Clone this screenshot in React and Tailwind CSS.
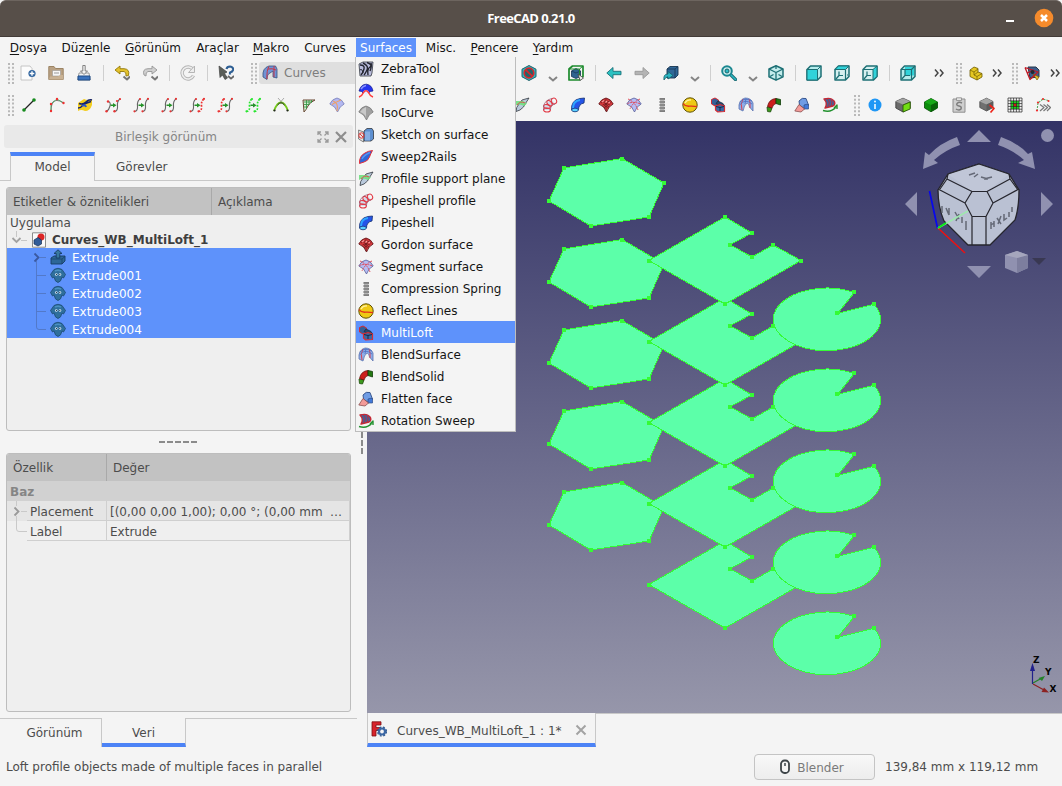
import React from "react";

function Svg({ children, className = "w-4 h-4" }) {
  return (
    <svg viewBox="0 0 16 16" className={className + " shrink-0"} strokeLinejoin="round">
      {children}
    </svg>
  );
}

const K = "#333940";

const FAN = "M.8 7Q3 2 8 1Q13 2 15.2 7Q10.500 9 8.500 15Q6.500 9 .8 7Z";

const art = {
  zebra: (
    <>
      <path d="M1 3L5 1H15L14 12L13 15H2Z" fill="#b9bcdc" stroke={K} strokeWidth=".8" />
      <path d="M2 4Q7 4 6 8T3 14M5 2Q11 5 9 9T6 14M9 1.500Q15 4 12 6T10 14M13 2Q14 5 12 10" fill="none" stroke="#23252f" strokeWidth="1.400" />
      <path d="M2 9Q4 7 5 12" fill="none" stroke="#23252f" />
    </>
  ),
  trim: (
    <>
      <path d="M1 8Q3 1 8.500 1.200Q14 2 15 8Q12 8 10.500 10Q8 6 5 10Q4 8 1 8Z" fill="#2634ee" stroke="#10188c" strokeWidth=".7" />
      <path d="M3 6Q5 3 8 2.500" stroke="#8c96ff" strokeWidth="1.400" fill="none" />
      <path d="M5 9Q8 5 11 9L8 12Z" fill="#e9ebff" />
      <path d="M1 14Q4 13 5.500 9.500Q8 6 10.500 9.500Q12 13 15 14" fill="none" stroke="#ff3a3a" strokeWidth="1.500" />
    </>
  ),
  iso: (
    <>
      <path d={FAN} fill="#a0a0a0" stroke="#777" strokeWidth=".8" />
      <path d="M2 7Q5 3 8 2L8 12Q6 8 2 7Z" fill="#c8c8c8" />
    </>
  ),
  sketch: (
    <>
      <path d="M6 4L9 1.500H14L15.500 4V12L13 14H6Z" fill="#5d8fd0" stroke={K} strokeWidth=".8" />
      <path d="M7 4.500H12V13.500H7Z" fill="#86aee4" />
      <path d="M.6 3L5.500 5V15L.6 12Z" fill="#e4e4e4" stroke="#555" strokeWidth=".7" />
      <circle cx="3.500" cy="8.500" r="2.700" fill="none" stroke="#e23a3a" />
      <path d="M2 7L5 10" stroke="#e23a3a" />
    </>
  ),
  sweep: (
    <>
      <path d="M1.500 14.500Q1 7 7 4Q10 2 14.500 1.500Q12.500 5 11.500 8Q10 12 6 13Z" fill="#2f66d8" stroke="#e5303a" />
      <path d="M4 10Q6 6 12 3.500" stroke="#5b93f0" strokeWidth="1.500" fill="none" />
    </>
  ),
  support: (
    <>
      <path d="M2 14.500Q2 10 5 7L8 3L15 1Q11 7 9.500 10L6 13Z" fill="#b9c9dc" stroke={K} strokeWidth=".8" />
      <path d="M1 4H9L13 6.500L10 9Q5 6 1 9Z" fill="#6fe07e" opacity=".9" />
      <path d="M3 8Q6 3.500 11 6" stroke="#d55" fill="none" />
    </>
  ),
  profile: (
    <>
      <path d="M2 13Q2 5 10 3L13 7Q8 8 8 13Z" fill="#cfdbea" />
      <g fill="none" stroke="#e23a46" strokeWidth="1.100">
        <ellipse cx="5" cy="13" rx="3.400" ry="2" />
        <ellipse cx="5" cy="9.500" rx="3.400" ry="1.900" transform="rotate(12 5 9.500)" />
        <ellipse cx="7.500" cy="6.200" rx="3.200" ry="2" transform="rotate(45 7.500 6.200)" />
        <ellipse cx="12" cy="4" rx="2.600" ry="3" transform="rotate(-20 12 4)" />
        <path d="M1.600 13V9Q3 3 10 1.500M8.400 13Q8.500 8 13 7" stroke="#96506a" strokeWidth=".7" />
      </g>
    </>
  ),
  pipe: (
    <>
      <path d="M1.500 13Q1 3 10 1.500L14.500 1L14 6Q8.500 7 8.500 13Q5 16 1.500 13Z" fill="#2454e8" stroke="#143070" strokeWidth=".8" />
      <path d="M3 11Q3 4 10 3" stroke="#2da4ff" strokeWidth="2" fill="none" />
      <ellipse cx="5" cy="13" rx="3.300" ry="1.800" fill="#5ad0ff" stroke="#143070" strokeWidth=".7" />
    </>
  ),
  gordon: (
    <>
      <path d={FAN} fill="#d8363b" stroke="#651a1c" strokeWidth=".9" />
      <path d="M3 6Q8 2 13 6M4.500 8Q8 5 12 8M6 11L8 9L10.500 11M4 3.500L11 10M12 3.500L5.500 9.500M8 1.500V14" fill="none" stroke="#651a1c" strokeWidth=".7" />
      <path d="M4 5L6 3.500M7.500 5.500L9 4M10.500 6L12 5" stroke="#ff9a9a" strokeWidth="1.300" />
    </>
  ),
  segment: (
    <>
      <path d={FAN} fill="#b5bdf5" stroke="#555c98" strokeWidth=".8" />
      <path d="M2 2Q9 5 12 13M14 2Q7 5 4 12M1.500 6.500Q8 4 14.500 7" fill="none" stroke="#e04a58" strokeDasharray="2 .7" />
    </>
  ),
  spring: (
    <>
      <path d="M5.500 2H11M5.500 5H11M5.500 8H11M5.500 11H11M5.500 14H11" stroke="#555" strokeWidth="1.500" />
      <path d="M6 3.500H10.500M6 6.500H10.500M6 9.500H10.500M6 12.500H10.500" stroke="#b5b5b5" strokeWidth="1.300" />
    </>
  ),
  reflect: (
    <>
      <circle cx="8" cy="8" r="7.200" fill="#eec916" stroke="#5f5100" />
      <path d="M3 6Q5 2.500 9 3" stroke="#fff09a" strokeWidth="1.300" fill="none" />
      <path d="M1 6.500Q3 9.500 7.500 9.200Q12 9 15 9.700" stroke="#e3301c" strokeWidth="1.300" fill="none" />
    </>
  ),
  loft: (
    <>
      <path d="M1.500 2.500L5 1L8.500 3V7.500L5 9L1.500 7Z" fill="#345f97" stroke="#d42b33" />
      <path d="M8 4L13 6.500L14.500 9L11 9L6 6.500Z" fill="#2a4a70" stroke="#1b2d44" strokeWidth=".8" />
      <path d="M5.500 9L10 7.500L14.500 9V14.500L7.500 14.800L5.500 13Z" fill="#3a68a3" stroke="#d42b33" strokeWidth="1.200" />
      <path d="M6 9.500L10 10.500L14 9.500M10 10.500V14" stroke="#15294a" fill="none" />
    </>
  ),
  blendsurf: (
    <>
      <path d="M1 12Q0 3 7 1Q13 1 15 6V14L11.500 10Q11 6 9 6Q6 8 5 14Z" fill="#8eaee8" stroke="#5a72b0" strokeWidth=".8" />
      <path d="M5 2Q2 7 4 13M11 2Q12.500 5 12 11" stroke="#dd4050" fill="none" />
      <path d="M1.500 8Q7 1 14 7M2 5Q7 0 14 4M8 1.500L7 7" stroke="#4c6ec0" fill="none" strokeWidth=".8" />
    </>
  ),
  blendsolid: (
    <>
      <path d="M1 10L6 11L4.500 15L1.500 14.500Z" fill="#3c9a1e" stroke="#1d4c0c" strokeWidth=".8" />
      <path d="M1.500 9.500Q3 2 10 1.500V6.500Q7 7 6 11Z" fill="#cd1f1c" stroke="#6b0c0a" strokeWidth=".8" />
      <path d="M10 1.500L14.500 2.500L14.500 8L10 6.500Z" fill="#257a13" stroke="#123c09" strokeWidth=".8" />
    </>
  ),
  flatten: (
    <>
      <path d="M5 4Q8 0 12 1.500L14.500 8L11 12L5.500 8Z" fill="#6f9ce4" stroke="#2f4d86" strokeWidth=".9" />
      <path d="M10 8Q12 7 14.500 7.500V12L10 12Z" fill="#4179d9" stroke="#2f4d86" strokeWidth=".7" />
      <path d="M.8 14L5 7.500L10.500 12L7 15Z" fill="#f39b99" stroke="#8c5050" strokeWidth=".8" />
    </>
  ),
  rotation: (
    <>
      <path d="M2 2Q9 0 12 4Q14 7 11 9L3 11Q6 6 2 2Z" fill="#42629a" stroke="#c42834" strokeWidth="1.400" />
      <path d="M5 2Q9 5 6 9M9 3Q11 5 9 9" stroke="#c42834" fill="none" strokeWidth=".9" />
      <path d="M1 13.500Q9 16 14 10M12 11L15 8V12" stroke="#22912e" strokeWidth="1.400" fill="none" />
    </>
  ),
  newdoc: (
    <>
      <path d="M1 1H10L12 3.500V15H1Z" fill="#fcfcfc" stroke="#c0c0c0" strokeWidth=".9" />
      <circle cx="12" cy="8.500" r="3.600" fill="#31659f" />
      <path d="M9.700 8.500H14.300M12 6.200V10.800" stroke="#fff" strokeWidth="1.400" />
    </>
  ),
  open: (
    <>
      <path d="M.8 1.500H6L7.500 3.500H15.200V14.500H.8Z" fill="#b9a183" stroke="#9c8464" />
      <path d="M4.500 5.500H12.500V11H4.500Z" fill="#f6f6f6" stroke="#8f8f8f" strokeWidth=".5" />
      <path d="M6 8H11" stroke="#999" />
      <path d="M2 11.500H10L12 10H15V14.500H1Z" fill="#c9b294" />
    </>
  ),
  save: (
    <>
      <path d="M3 8H13L14.200 15H1.800Z" fill="#f3f3f3" stroke="#777" strokeWidth=".7" />
      <path d="M2 11H14V15H2Z" fill="#3b73bd" stroke="#1f4d88" />
      <path d="M6.800 .5H9.200V6H11.500L8 9.500L4.500 6H6.800Z" fill="#f2f2f2" stroke="#777" strokeWidth=".9" />
    </>
  ),
  undo: (
    <>
      <path d="M6 1L1 5L6 9V6.500H10Q12.500 7 12 11L14.500 10.500Q16 4 10 3.700H6Z" fill="#e4c22c" stroke="#937807" strokeWidth=".9" />
      <path d="M9.500 11.500L13 14.500L16 11.500" fill="none" stroke="#777" strokeWidth="2" />
    </>
  ),
  redo: (
    <>
      <path d="M10 1L15 5L10 9V6.500H6Q3.500 7 4 11L2 10Q0 4 6 3.700H10Z" fill="#d0d0d0" stroke="#959595" strokeWidth=".9" />
      <path d="M9.500 11.500L13 14.500L16 11.500" fill="none" stroke="#777" strokeWidth="2" />
    </>
  ),
  refresh: (
    <>
      <path d="M13 4.500A6 6 0 1 0 13.500 10.500" fill="none" stroke="#b5b5b5" strokeWidth="3.400" />
      <path d="M13 4.500A6 6 0 1 0 13.500 10.500" fill="none" stroke="#efefef" strokeWidth="1.500" />
      <path d="M14.500 1V7.500H8.500Z" fill="#ededed" stroke="#b5b5b5" />
    </>
  ),
  help: (
    <>
      <path d="M1 1L9 7L6.500 8.500L9.500 13L7 14.500L4.500 10L2 12.500Z" fill="#5a5e58" stroke="#444" strokeWidth=".7" />
      <path d="M8.500 4Q9 1.500 12 1.500Q15.500 2 15 5Q14.500 7 12 7.500V9.500" fill="none" stroke="#2e5f94" strokeWidth="2.200" />
      <path d="M10 11L13 13.700L16 11" fill="none" stroke="#666" strokeWidth="1.800" />
    </>
  ),
  wb: (
    <>
      <path d="M1 12Q0 3 7 1H13.500L15 4V13L11 12V6L8 8Q5 9 5 14.500Z" fill="#6f93d5" stroke="#39527f" strokeWidth=".8" />
      <path d="M7 1.500Q4.500 5 5 14M12 1V12M6 4Q10 3 14 5" stroke="#cb3344" fill="none" />
    </>
  ),
  noclip: (
    <>
      <path d="M8 .5L15 4.200V11.800L8 15.500L1 11.800V4.200Z" fill="#28bcc4" stroke="#22616b" />
      <circle cx="8" cy="8" r="4.800" fill="#25646b" stroke="#d7262c" strokeWidth="1.700" />
      <path d="M4.800 4.800L11.200 11.200" stroke="#d7262c" strokeWidth="1.700" />
    </>
  ),
  bbox: (
    <>
      <path d="M1 4L4.500 1H15V11.500L11.500 15H1Z" fill="none" stroke="#1c8a2c" strokeWidth="1.700" />
      <path d="M3.500 6L8 3.500L12.500 6V11.500L8 13.500L3.500 11.500Z" fill="#2f6390" stroke="#173455" strokeWidth=".8" />
      <path d="M3.500 6L8 8L12.500 6" stroke="#173455" strokeWidth=".7" fill="none" />
      <path d="M1 4H11.500V15M11.500 4L15 1" stroke="#1c8a2c" fill="none" />
      <path d="M10 9L15.500 13L12 15.500Z" fill="#eee" stroke="#444" strokeWidth=".8" />
    </>
  ),
  left: <path d="M.8 8L7 2.500V6.300H15V9.700H7V13.500Z" fill="#2bc1c1" stroke="#1b7078" strokeWidth=".9" />,
  right: <path d="M15.200 8L9 2.500V6.300H1V9.700H9V13.500Z" fill="#b4b4b4" stroke="#999" strokeWidth=".9" />,
  link: (
    <>
      <path d="M4 4L7 1.500H15V10L12 13H4Z" fill="#2f6798" stroke="#173450" strokeWidth=".9" />
      <path d="M4 4H12V13M12 4L15 1.500" stroke="#173450" fill="none" strokeWidth=".8" />
      <path d="M1 15Q0 9 5 9V6.500L10 10.500L5 14V11.800Q2.500 12 1 15Z" fill="#2bb5c1" stroke="#155f68" strokeWidth=".8" />
    </>
  ),
  zoomfit: (
    <>
      <path d="M9 9L14.500 14.500" stroke="#1b6770" strokeWidth="3.200" strokeLinecap="round" />
      <path d="M9 9L14.500 14.500" stroke="#2bb9c3" strokeWidth="1.600" strokeLinecap="round" />
      <circle cx="6" cy="6" r="4.800" fill="#c9e9ea" stroke="#1b8790" strokeWidth="2" />
      <circle cx="6" cy="6" r="2" fill="#2bb9c3" stroke="#17656d" />
    </>
  ),
  isocube: (
    <>
      <path d="M8 .8L15 4V11.800L8 15.200L1 11.800V4Z" fill="#c4ecec" stroke="#1c6f74" strokeWidth="1.500" />
      <path d="M1 4L8 7.500L15 4M8 7.500V15M8 1V4M2 11.500L5.500 9.500M14 11.500L10.500 9.500" stroke="#1c6f74" strokeWidth="1.300" fill="none" />
    </>
  ),
  front: (
    <>
      <path d="M1 4.500L4.500 1H15V11.500L11.500 15H1Z" fill="#b4ecec" stroke="#1c6f74" strokeWidth="1.500" />
      <path d="M1 4.500H11.500V15H1Z" fill="#30d3da" stroke="#1c6f74" />
      <path d="M11.500 4.500L15 1" stroke="#1c6f74" />
    </>
  ),
  top: (
    <>
      <path d="M1 4.500L4.500 1H15V11.500L11.500 15H1Z" fill="#d5f0f0" stroke="#1c6f74" strokeWidth="1.500" />
      <path d="M1 4.500L4.500 1H15L11.500 4.500Z" fill="#30d3da" stroke="#1c6f74" />
      <path d="M11.500 4.500V15M5 6.500V10.500H9M5 10.500L2 14M13 10H14" stroke="#1c6f74" strokeWidth="1.200" fill="none" />
    </>
  ),
  rightv: (
    <>
      <path d="M1 4.500L4.500 1H15V11.500L11.500 15H1Z" fill="#d5f0f0" stroke="#1c6f74" strokeWidth="1.500" />
      <path d="M11 4.500L15 1V11.500L11 15Z" fill="#30d3da" stroke="#1c6f74" />
      <path d="M1 4.500H11M5 6.500V10.500H9M5 10.500L2 14" stroke="#1c6f74" strokeWidth="1.200" fill="none" />
    </>
  ),
  rear: (
    <>
      <path d="M1 4.500L4.500 1H15V11.500L11.500 15H1Z" fill="#b4ecec" stroke="#1c6f74" strokeWidth="1.500" />
      <path d="M5 2H14V10.500H5Z" fill="#30d3da" />
      <path d="M1 4.500H11.500V15M11.500 4.500L15 1M5 5V10.500H10M5 10.500L1.800 14" stroke="#1c6f74" strokeWidth="1.200" fill="none" />
    </>
  ),
  part: (
    <>
      <path d="M2 5L6 2L10 3.500V7L14 8.500V12L9 15L2 11.500Z" fill="#e5c722" stroke="#6d5b00" strokeWidth=".8" />
      <path d="M2 5L6 7L10 4M6 7V10L9 11.500L14 8.500M9 11.500V15M6 10L10 7" stroke="#6d5b00" fill="none" strokeWidth=".7" />
    </>
  ),
  measure: (
    <>
      <path d="M4 2H12L15 5V12L6 13Z" fill="#3d5f8e" stroke="#27364a" />
      <path d="M9 9L15 12L13 15Z" fill="#e5bb33" stroke="#7a5f00" strokeWidth=".7" />
      <path d="M1 2.500L6 14.500L14 7L1 2.500M3 8L10 5" stroke="#c01823" strokeWidth="1.300" fill="none" />
      <circle cx="8.500" cy="7" r="2" fill="#202833" />
    </>
  ),
  info: (
    <>
      <circle cx="8" cy="8" r="6.500" fill="#1f97f5" />
      <path d="M8 7V12" stroke="#fff" strokeWidth="1.500" />
      <circle cx="8" cy="4.500" r=".9" fill="#fff" />
    </>
  ),
  cubegreenface: (
    <>
      <path d="M.8 4.500L8 1.200L15.200 4.500V11L8 15L.8 11Z" fill="#6b6b6b" stroke="#3a3a3a" strokeWidth=".8" />
      <path d="M.8 4.500L8 1.200L15.200 4.500L8 7.500Z" fill="#a2a2a2" />
      <path d="M8 8L15.200 5V12L8 15Z" fill="#72dd13" stroke="#2a5c05" strokeWidth=".9" />
    </>
  ),
  cubegreen: (
    <>
      <path d="M1.500 5L8 1.500L14.500 5V11L8 14.800L1.500 11Z" fill="#0b8c0b" stroke="#064b06" strokeWidth=".8" />
      <path d="M1.500 5L8 1.500L14.500 5L8 8Z" fill="#17a817" />
      <path d="M8 8L14.500 5V11L8 14.800Z" fill="#086408" />
    </>
  ),
  clip: (
    <>
      <path d="M2 2H14V15.200H2Z" fill="#cfcfcf" stroke="#8f8f8f" />
      <path d="M5.500 .8H10.500V3.500H5.500Z" fill="#e5e5e5" stroke="#888" strokeWidth=".8" />
      <path d="M11 6Q8 4.500 6 6.500Q5 8.500 8 9T10 12Q8 14 5 12" fill="none" stroke="#7d7d7d" strokeWidth="1.500" />
    </>
  ),
  cubearrow: (
    <>
      <path d="M.8 4.500L7.500 1.200L14 4.500V10.500L7.500 14L.8 10.500Z" fill="#707070" stroke="#4b4b4b" strokeWidth=".8" />
      <path d="M.8 4.500L7.500 1.200L14 4.500L7.500 7.500Z" fill="#a5a5a5" />
      <path d="M7.500 7.500L14 4.500V10.500L7.500 14Z" fill="#5c5c5c" />
      <path d="M10.500 8L15 11.500L11.500 15.500" stroke="#ee2218" strokeWidth="1.600" fill="none" />
    </>
  ),
  grid: (
    <>
      <path d="M1 1H15V15H1Z" fill="#f5f5f5" />
      <path d="M4 4H12V12H4Z" fill="#1fd81f" />
      <path d="M6.500 6.500H9.500V9.500H6.500Z" fill="#f01717" />
      <path d="M1 1H15V15H1ZM1 3.800H15M1 6.600H15M1 9.400H15M1 12.200H15M3.800 1V15M6.600 1V15M9.400 1V15M12.200 1V15" fill="none" stroke="#222" strokeWidth=".7" />
    </>
  ),
  forward: (
    <>
      <path d="M2 14L3 6L8 2L13 3.500" stroke="#54ad61" fill="none" strokeWidth="1.100" strokeDasharray="2 1" />
      <g fill="#ee2d2d"><circle cx="2" cy="13.500" r="1.100" /><circle cx="3" cy="5.500" r="1.100" /><circle cx="8" cy="2" r="1.100" /><circle cx="13.500" cy="4" r="1.100" /></g>
      <path d="M5 7.500L9 10.500L5 14M8.500 7.500L12.500 10.500L8.500 14M12 7.500L15.500 10.500L12 14" fill="none" stroke="#777" strokeWidth="1.200" />
    </>
  ),
  line: (
    <>
      <path d="M3 13L13 3" stroke="#222" strokeWidth="1.200" />
      <circle cx="3" cy="13" r="1.800" fill="#168b1d" /><circle cx="13" cy="3" r="1.800" fill="#168b1d" />
    </>
  ),
  arc: (
    <>
      <path d="M2 14Q2 4 7 3.500Q11 3 14.500 6" fill="none" stroke="#777" strokeWidth="1.100" />
      <path d="M2 14L2 7L8 2L14.500 6" fill="none" stroke="#46a559" strokeWidth=".8" />
      <g fill="#ee3030"><circle cx="2" cy="14" r="1.200" /><circle cx="2" cy="7" r="1.200" /><circle cx="8" cy="2" r="1.200" /><circle cx="14.500" cy="6" r="1.200" /></g>
    </>
  ),
  flag: (
    <>
      <path d="M1 6L7 2Q11 4 15 2V8Q13 14 8 14Q4 12 1 14Z" fill="#f3cd1e" />
      <path d="M1 11Q4 11 5 9T14 4.500M2 6.500Q6 8 9 5T15 3" stroke="#15236f" strokeWidth="1.600" fill="none" />
      <path d="M5 9Q8 7 9 10" stroke="#2c56cb" strokeWidth="2" fill="none" />
    </>
  ),
  crescent: (
    <>
      <path d="M2 3H14Q9 5 7 9T3 15Z" fill="#d5edd3" stroke="#6b4935" />
      <path d="M3 5H11M3 7.500H8M3 10H6M5.500 3V12M8 3V8M10.500 3V5.500" stroke="#3a9a4a" strokeWidth=".9" />
    </>
  ),
  tangent: (
    <>
      <path d="M5 1L12 9M11 1L4 9" stroke="#aaa" />
      <path d="M1 14Q4 5.500 8 5.500T15 14" stroke="#76c91e" strokeWidth="1.800" fill="none" />
      <path d="M4.500 8Q8 3.500 11.500 8" stroke="#333" fill="none" />
      <circle cx="1.500" cy="13.500" r="1.100" fill="#222" /><circle cx="14.500" cy="13.500" r="1.100" fill="#222" />
    </>
  ),
  bluefan: (
    <>
      <path d={FAN} fill="#b3b8f1" stroke="#7f86bd" strokeWidth=".9" />
      <path d="M4 4Q10 6 8 14M3 7.500Q9 4 12 3" fill="none" stroke="#f0a062" strokeWidth="1.100" />
    </>
  ),
};

function joinArt(l, r) {
  return (
    <>
      <path d="M1.500 14.500Q5 14 4.500 9T7 2" fill="none" stroke={l || "#666"} strokeWidth={l ? 1.700 : 1.100} strokeDasharray={l ? "1.800 1.300" : "none"} />
      <path d="M9.500 14.500Q13 14 12.500 9T15 2" fill="none" stroke={r || "#666"} strokeWidth={r ? 1.700 : 1.100} strokeDasharray={r ? "1.800 1.300" : "none"} />
      <path d="M5.500 7.500H8V6L11.500 8.300L8 10.600V9H5.500Z" fill="#249329" />
      <g fill={l === "#27e52f" ? l : "#e83434"}>
        <circle cx="1.500" cy="14.300" r="1.100" /><circle cx="9.500" cy="14.300" r="1.100" />
        <circle cx="7" cy="2" r="1.100" /><circle cx="15" cy="1.800" r="1.100" />
      </g>
    </>
  );
}
art.join1 = (
  <>
    <path d="M3 4.500Q6 5 5 9T1.500 14.500M15 2Q12 4 12.500 9T9.500 14.500" fill="none" stroke="#666" strokeWidth="1.100" />
    <path d="M5.500 7.500H8V6L11.500 8.300L8 10.600V9H5.500Z" fill="#249329" />
    <g fill="#e83434"><circle cx="3" cy="4.500" r="1.200" /><circle cx="1.500" cy="14.300" r="1.200" /><circle cx="9.500" cy="14.300" r="1.200" /><circle cx="12" cy="4" r="1.100" /><circle cx="15" cy="2" r="1.100" /></g>
  </>
);
art.join2 = joinArt();
art.join3 = joinArt();
art.join4 = joinArt(null, "#ef2d2d");
art.join5 = joinArt("#ef2d2d", null);
art.join6 = joinArt("#27e52f", "#27e52f");

const Tool = ({ name }) => (
  <div className="w-7 shrink-0 flex items-center justify-center">
    <Svg>{art[name]}</Svg>
  </div>
);

const Sep = () => (
  <div className="w-2.5 shrink-0 flex justify-center">
    <div className="w-px h-4 bg-[#cfcfcf]" />
  </div>
);

const Handle = () => (
  <svg viewBox="0 0 6 21" className="w-1.5 h-[21px] shrink-0">
    <path d="M1 0V21M5 0V21" stroke="#b9b9b9" strokeWidth="2" strokeDasharray="2 1.800" />
  </svg>
);

const Drop = () => (
  <div className="w-[19px] shrink-0 flex justify-center pt-3">
    <svg viewBox="0 0 10 6" className="w-2.5 h-1.5"><path d="M1 1L5 4.500L9 1" fill="none" stroke="#858585" strokeWidth="2" /></svg>
  </div>
);

const More = ({ className }) => (
  <div className={"shrink-0 flex " + className}>
    <svg viewBox="0 0 10 8" className="w-2.5 h-2 shrink-0"><path d="M1 .5L4 4L1 7.500M6 .5L9 4L6 7.500" fill="none" stroke="#454545" strokeWidth="1.500" /></svg>
  </div>
);

const menus = [
  ["D", "osya", "", "w-[49px]"],
  ["", "Düz", "e", "w-[66px]", "nle"],
  ["G", "örünüm", "", "w-[68px]"],
  ["", "Araçlar", "", "w-[61px]"],
  ["M", "akro", "", "w-[46px]"],
  ["", "Curves", "", "w-[62px]"],
  ["", "Surfaces", "", "w-[60px]"],
  ["", "Misc.", "", "w-[50px]"],
  ["P", "encere", "", "w-[57px]"],
  ["Y", "ardım", "", "w-[60px]"],
];

function MenuBar() {
  return (
    <div className="h-[19px] mt-px pl-1 flex shrink-0 text-[#141414]">
      {menus.map(([a, b, c, w, d], i) => (
        <div key={i} className={w + " flex items-center justify-center whitespace-pre " + (i === 6 ? "bg-[#5e92fb] text-white" : "")}>
          <span><u className="underline-offset-2">{a}</u>{b}<u className="underline-offset-2">{c}</u>{d}</span>
        </div>
      ))}
    </div>
  );
}

const surfaceItems = [
  ["zebra", "ZebraTool"], ["trim", "Trim face"], ["iso", "IsoCurve"], ["sketch", "Sketch on surface"],
  ["sweep", "Sweep2Rails"], ["support", "Profile support plane"], ["profile", "Pipeshell profile"],
  ["pipe", "Pipeshell"], ["gordon", "Gordon surface"], ["segment", "Segment surface"],
  ["spring", "Compression Spring"], ["reflect", "Reflect Lines"], ["loft", "MultiLoft"],
  ["blendsurf", "BlendSurface"], ["blendsolid", "BlendSolid"], ["flatten", "Flatten face"], ["rotation", "Rotation Sweep"],
];

function SurfacesMenu() {
  return (
    <div className="absolute left-[355px] top-[57px] w-[161px] h-[375px] bg-[#f4f4f4] border border-t-0 border-[#bdbdbd] text-[#141414] z-10">
      {surfaceItems.map(([icon, label]) => (
        <div key={icon} className={"h-[22px] pl-0.5 pt-0.5 flex items-center gap-[7px] whitespace-nowrap " + (icon === "loft" ? "bg-[#5e92fb] text-white" : "")}>
          <Svg>{art[icon]}</Svg>
          <span>{label}</span>
        </div>
      ))}
    </div>
  );
}

function Toolbars() {
  return (
    <div className="h-16 shrink-0 flex flex-col overflow-hidden">
      <div className="h-8 flex items-center pl-2">
        <Handle />
        <div className="w-px" />
        {["newdoc", "open", "save"].map((n) => <Tool key={n} name={n} />)}
        <Sep /><Tool name="undo" /><Tool name="redo" />
        <Sep /><Tool name="refresh" />
        <Sep /><Tool name="help" />
        <div className="w-[19px] shrink-0 flex justify-center pl-2"><Handle /></div>
        <div className="w-60 mr-4 h-[22px] shrink-0 rounded-[3px] bg-[#dfdfdf] text-[#7d7d7d] flex items-center gap-[6px] pl-[3px]">
          <Svg>{art.wb}</Svg><span>Curves</span>
        </div>
        <Tool name="noclip" /><Drop /><Tool name="bbox" />
        <Sep /><Tool name="left" /><Tool name="right" /><div className="w-px shrink-0" /><Tool name="link" /><Drop />
        <div className="w-px shrink-0" /><Sep /><Tool name="zoomfit" /><Drop /><Tool name="isocube" />
        <Sep /><Tool name="front" /><Tool name="top" /><Tool name="rightv" />
        <Sep /><Tool name="rear" />
        <More className="w-[34px] pl-3" /><Handle /><Tool name="part" />
        <More className="w-[22px] pl-0.5" /><Handle /><Tool name="measure" /><More className="w-5 pl-1" />
      </div>
      <div className="h-8 flex items-center pl-2">
        <Handle />
        <div className="w-px" />
        {["line", "arc", "flag", "join1", "join2", "join3", "join4", "join5", "join6", "tangent", "crescent", "bluefan"].map((n) => <Tool key={n} name={n} />)}
        <div className="w-[157px] shrink-0" />
        {["support", "profile", "pipe", "gordon", "segment", "spring", "reflect", "loft", "blendsurf", "blendsolid", "flatten", "rotation"].map((n) => <Tool key={n} name={n} />)}
        <div className="w-[17px] shrink-0 flex justify-center pl-2"><Handle /></div>
        {["info", "cubegreenface", "cubegreen", "clip", "cubearrow", "grid", "forward"].map((n) => <Tool key={n} name={n} />)}
      </div>
    </div>
  );
}

const bodyArt = (
  <>
    <path d="M4 2.500Q8 0 12 2.500L15.500 7.500L13.500 11L12 10Q11 15 8 15.500Q5 15 4 10L2.500 11L.5 7.500Z" fill="#2f6f9c" stroke="#1c4a72" strokeWidth=".8" />
    <path d="M5 4Q8 2.500 11 4" stroke="#4a90c0" fill="none" strokeWidth="1.500" />
    <circle cx="6.300" cy="7.500" r="1.300" fill="#cfe4f5" /><circle cx="10" cy="7.500" r="1.300" fill="#cfe4f5" />
    <circle cx="6.500" cy="7.500" r=".6" fill="#123" /><circle cx="9.800" cy="7.500" r=".6" fill="#123" />
  </>
);
const extrudeArt = (
  <>
    <path d="M1 9L4 7H15V12L12 15H1Z" fill="#2d6798" stroke="#173c66" strokeWidth=".9" />
    <path d="M8 .8L12 4.500H9.800V9H6.200V4.500H4Z" fill="#38789f" stroke="#173c66" strokeWidth=".9" />
    <path d="M1 10H12V15M12 10L15 7.500" stroke="#173c66" fill="none" strokeWidth=".7" />
  </>
);

function TreePanel() {
  return (
    <div className="mx-1.5 w-[345px] h-[244px] mt-1.5 shrink-0 border border-[#bdbdbd] rounded-[3px] bg-[#efefef] overflow-hidden">
      <div className="h-[27px] bg-[#c2c2c2] flex items-center">
        <div className="w-[205px] h-full pl-1.5 flex items-center border-r border-[#a9a9a9]">Etiketler &amp; öznitelikleri</div>
        <div className="pl-1.5">Açıklama</div>
      </div>
      <div className="h-4 pl-[3px] flex items-center">Uygulama</div>
      <div className="h-[17px] flex items-center font-bold text-[#3e3e3e]">
        <svg viewBox="0 0 24 18" className="w-6 h-[18px]">
          <path d="M9.500 0V6M14 9.500H20" stroke="#c7c7c7" /><path d="M5.500 7L9.500 11L13.500 7" fill="none" stroke="#a2a2a2" strokeWidth="1.800" />
        </svg>
        <Svg>
          <path d="M1.500 .8H14.500V15.200H1.500Z" fill="#fafafa" stroke="#8c8c8c" />
          <circle cx="10" cy="5" r="3.500" fill="#dc2525" />
          <path d="M3 8L7 5.500L10.500 8V12L7 14L3 12Z" fill="#325c98" stroke="#172f55" strokeWidth=".7" />
        </Svg>
        <span className="pl-[5px]">Curves_WB_MultiLoft_1</span>
      </div>
      <div className="w-[284px] bg-[#5e92fb] text-white">
        {["Extrude", "Extrude001", "Extrude002", "Extrude003", "Extrude004"].map((n, i) => (
          <div key={n} className="h-[18px] flex items-center">
            <svg viewBox="0 0 43 18" className="w-[43px] h-[18px]">
              <path d={i === 4 ? "M29.500 0V7Q29.500 9.500 32 9.500H39" : i === 0 ? "M29.500 13V18M33 9.500H39" : "M29.500 0V18M29.500 9.500H39"} fill="none" stroke="#5279c9" />
              {i === 0 && <path d="M27.500 5.500L31.500 9.500L27.500 13.500" fill="none" stroke="#3a59a0" strokeWidth="1.800" />}
            </svg>
            <Svg>{i === 0 ? extrudeArt : bodyArt}</Svg>
            <span className="pl-1.5 pt-0.5">{n}</span>
          </div>
        ))}
      </div>
    </div>
  );
}

function PropertyPanel() {
  return (
    <div className="mx-1.5 w-[345px] h-[259px] shrink-0 border border-[#bdbdbd] rounded-[3px] bg-[#efefef] overflow-hidden">
      <div className="h-[27px] bg-[#c2c2c2] flex items-center">
        <div className="w-[100px] h-full pl-1.5 flex items-center border-r border-[#a9a9a9]">Özellik</div>
        <div className="pl-1.5">Değer</div>
      </div>
      <div className="h-5 bg-[#d1d1d1] pl-[3px] pt-0.5 flex items-center font-bold text-[#858585]">Baz</div>
      <div className="h-5 bg-[#e5e5e5] flex items-stretch">
        <svg viewBox="0 0 20 20" className="w-5 h-5"><path d="M9.500 0V5M9.500 15V20M14 10.500H20" stroke="#c9c9c9" /><path d="M7.500 6.500L11.500 10.500L7.500 14.500" fill="none" stroke="#999" strokeWidth="1.800" /></svg>
        <div className="w-20 pl-[3px] pt-0.5 flex items-center border-r border-b border-[#cfcfcf]">Placement</div>
        <div className="w-[243px] pl-[3px] pr-[7px] pt-0.5 flex items-center justify-between border-r border-b border-[#cfcfcf] whitespace-nowrap"><span>[(0,00 0,00 1,00); 0,00 °; (0,00 mm</span><span>…</span></div>
      </div>
      <div className="h-5 flex items-stretch">
        <svg viewBox="0 0 20 20" className="w-5 h-5"><path d="M9.500 0V8Q9.500 10.500 12 10.500H20" stroke="#c9c9c9" fill="none" /></svg>
        <div className="w-20 pl-[3px] pt-0.5 flex items-center border-r border-b border-[#cfcfcf]">Label</div>
        <div className="w-[243px] pl-[3px] pt-0.5 flex items-center border-r border-b border-[#cfcfcf]">Extrude</div>
      </div>
    </div>
  );
}

function SidePanel() {
  return (
    <div className="w-[357px] shrink-0 flex flex-col text-[#4c4c4c]">
      <div className="mt-1 ml-1 w-[349px] h-[23px] shrink-0 bg-[#e9e9e9] rounded-[3px] flex items-center text-[#858585]">
        <span className="flex-1 text-center pl-[11px] pt-px">Birleşik görünüm</span>
        <svg viewBox="0 0 12 12" className="w-3 h-3"><path d="M1 4V1H4M8 1H11V4M11 8V11H8M4 11H1V8M1 1L4.500 4.500M11 1L7.500 4.500M11 11L7.500 7.500M1 11L4.500 7.500" fill="none" stroke="#9a9a9a" strokeWidth="1.300" /></svg>
        <svg viewBox="0 0 12 12" className="w-3 h-3 ml-1.5 mr-1.5"><path d="M1 1L11 11M11 1L1 11" stroke="#8d8d8d" strokeWidth="2.200" /></svg>
      </div>
      <div className="mt-1 h-[29px] shrink-0 flex">
        <div className="w-2.5 border-b border-[#c8c8c8]" />
        <div className="w-[85px] border-x border-[#c8c8c8] border-t-4 border-t-[#4c83f6] flex items-center justify-center pb-1">Model</div>
        <div className="flex-1 border-b border-[#c8c8c8] pl-[21px] pt-0.5 flex items-center">Görevler</div>
      </div>
      <TreePanel />
      <div className="h-[22px] shrink-0 flex items-center justify-center gap-0.5 pr-0.5">
        {[0, 1, 2, 3, 4].map((i) => <div key={i} className="w-1.5 h-0.5 bg-[#8b8b8b]" />)}
      </div>
      <PropertyPanel />
      <div className="mt-1.5 h-[29px] shrink-0 flex">
        <div className="w-[102px] border-t border-r border-[#c8c8c8] pl-2 flex items-center justify-center">Görünüm</div>
        <div className="w-[84px] border-r border-[#c8c8c8] border-b-4 border-b-[#4c83f6] flex items-center justify-center pt-1">Veri</div>
        <div className="flex-1 border-t border-[#c8c8c8]" />
      </div>
    </div>
  );
}

const hexPts = [[564, 168], [622, 158.500], [664, 183], [649, 217], [591, 226], [549, 201]];
const cutPts = [[725, 217], [752, 233], [730, 244.700], [752, 257], [773, 245], [801, 260.500], [725, 304], [649, 260.500]];
const rows = [4, 3, 2, 1, 0];

const Dots = ({ pts }) => pts.map(([x, y], i) => <rect key={i} x={Math.round(x) - 2} y={Math.round(y) - 2} width="4" height="4" fill="#35fb35" />);

function Poly({ pts, i }) {
  return (
    <g transform={`translate(0 ${Math.round(i * 81.1)})`}>
      <polygon points={pts.map((p) => p.join(",")).join(" ")} fill="#5cffa9" stroke="#35fb35" />
      <Dots pts={pts} />
    </g>
  );
}

function NavCube() {
  return (
    <g>
      <g fill="#9091b0">
        <path d="M979 130L991 142H967ZM979 278L991 266H967ZM905 204L917 192V216ZM1053 204L1041 192V216Z" />
        <circle cx="1047.500" cy="135.500" r="6.500" />
        <path d="M957 137L960 145Q945 150 934 160L938 163L923 169L925 152L929 155Q940 143 957 137Z" />
        <path d="M1001 137L998 145Q1013 150 1024 160L1018 163L1035 169L1032 152L1028 154Q1018 143 1001 137Z" />
        <path d="M1005 255L1017 251L1028 255V268L1017 273L1005 268Z" />
      </g>
      <path d="M1017 258L1028 255V268L1017 273Z" fill="#7d7e9e" />
      <path d="M1005 255L1017 251L1028 255L1017 258Z" fill="#a5a6bd" />
      <path d="M1032 258H1046L1039 265Z" fill="#393852" />
      <path d="M979 164L1009 174L1019 190Q1019 208 1015 220L990 245H968L944 221Q938 207 938 190L948 174Z" fill="#bac1d3" stroke="#26262e" strokeWidth="1.300" />
      <path d="M948 174L979 164L1009 174L987 191.500H972Z" fill="#c0c6d7" />
      <g fill="none" stroke="#26262e" strokeWidth="1.200" strokeLinejoin="round">
        <path d="M947 179L972 191.500H987L1010 179M972 191.500L965 203L972 216.500H986L993 203L987 191.500M938 189L965 203M993 203L1019 189M972 216.500V245M986 216.500V245M947 179L940 189M1010 179L1018 190" />
        <path d="M948 174L979 164L1009 174M948 174L947 179M1009 174L1010 179" />
      </g>
      <g fill="none" stroke="#555966" strokeWidth="1.500" opacity=".85">
        <path d="M969 175L975 173M974 177L978 174M981 177L988 179M984 179L992 177" />
        <path d="M942 206V213M946 208L949 215M949 208V215M955 212L959 219M959 214L956 221M962 217V223M966 221V230" />
        <path d="M991 222V229M994 221V227M991 225L994 223M997 218L1001 224M1001 216L998 224M1004 214V220L1007 218M1009 212V217M1012 207V212" />
      </g>
      <path d="M929.500 191L937.500 228" stroke="#0707ef" strokeWidth="1.700" />
      <path d="M938 228L965 253" stroke="#ef1010" strokeWidth="1.500" />
      <path d="M938 228L968 211" stroke="#9fe9ae" strokeWidth="1.500" />
      <path d="M938 228L946 223" stroke="#06ee15" strokeWidth="2" />
    </g>
  );
}

function Viewport() {
  return (
    <svg viewBox="367 121 695 592" className="w-[695px] h-[592px] shrink-0">
      <defs>
        <linearGradient id="sky" x1="0" y1="0" x2="0" y2="1"><stop offset="0" stopColor="#333366" /><stop offset="1" stopColor="#9696aa" /></linearGradient>
      </defs>
      <rect x="367" y="121" width="695" height="592" fill="url(#sky)" />
      <g shapeRendering="crispEdges">
        {rows.map((i) => <Poly key={i} pts={hexPts} i={i} />)}
        {rows.map((i) => <Poly key={i} pts={cutPts} i={i} />)}
        {rows.map((i) => (
          <g key={i} transform={`translate(0 ${Math.round(i * 81.1)})`}>
            <path d="M854.300 292.500A53.700 31.200 0 1 0 874 304.300L837.500 313.500Z" fill="#5cffa9" stroke="#35fb35" />
            <Dots pts={[[854, 292], [874, 304], [837, 313]]} />
          </g>
        ))}
      </g>
      <NavCube />
      <g strokeWidth="1.200">
        <path d="M1032.500 684V666" stroke="#21218c" /><path d="M1030 671L1032.500 663L1035 671Z" fill="#21218c" />
        <path d="M1033 683L1041 678.500" stroke="#228228" /><path d="M1045 676L1042 681L1038.500 678Z" fill="#228228" />
        <path d="M1033 684L1044 690" stroke="#8c2222" /><path d="M1049 692.500L1041.500 692L1044 687.500Z" fill="#8c2222" />
      </g>
      <g className="font-bold text-[9px]" fill="#050505">
        <text x="1033" y="663">Z</text><text x="1045" y="675">Y</text><text x="1049.500" y="692">X</text>
      </g>
    </svg>
  );
}

export default function App() {
  return (
    <div className="relative w-[1062px] h-[786px] overflow-hidden flex flex-col bg-[#f4f4f4] text-[12px] leading-4 font-['DejaVu_Sans',sans-serif]">
      <div className="h-[37px] shrink-0 bg-[#574f49] border-t border-t-[#6d655f] border-b border-b-[#423b37] rounded-t-md flex items-center text-white">
        <div className="w-[1006px] pl-14 pb-0.5 text-center font-['Open_Sans',sans-serif] font-bold text-[13px] tracking-[-0.6px]">FreeCAD 0.21.0</div>
        <div className="w-2 h-0.5 mt-1 bg-white shrink-0" />
        <svg viewBox="0 0 20 20" className="w-5 h-5 ml-5 mb-0.5"><circle cx="10" cy="10" r="9.300" fill="#f58b2c" /><path d="M7 7L13 13M13 7L7 13" stroke="#fff" strokeWidth="2.500" /></svg>
      </div>
      <MenuBar />
      <Toolbars />
      <div className="flex h-[626px] shrink-0">
        <SidePanel />
        <div className="w-2.5 shrink-0 pl-1 pt-[311px]">
          <div className="flex flex-col gap-0.5">
            {[0, 1, 2].map((i) => <div key={i} className="w-0.5 h-1.5 bg-[#8b8b8b]" />)}
          </div>
        </div>
        <div className="flex flex-col text-[#4c4c4c]">
          <Viewport />
          <div className="h-[34px] flex">
            <div className="w-[229px] pl-[3px] pt-1 border-x border-[#c8c8c8] border-b-4 border-b-[#4c83f6] flex items-center">
              <Svg className="w-4 h-4 mb-0.5">
                <path d="M1 .8H10V4H5V6.500H9V9.500H5V15H1Z" fill="#d8232b" stroke="#7c1015" strokeWidth=".8" />
                <circle cx="11" cy="10.500" r="3" fill="none" stroke="#3c68a5" strokeWidth="2.200" />
                <circle cx="11" cy="10.500" r="4.500" fill="none" stroke="#2f5992" strokeWidth="1.200" strokeDasharray="2 1.600" />
              </Svg>
              <span className="pl-2.5 pt-0.5 flex-1 whitespace-nowrap">Curves_WB_MultiLoft_1 : 1*</span>
              <svg viewBox="0 0 12 12" className="w-3 h-3 mr-2"><path d="M1.500 1.500L10.500 10.500M10.500 1.500L1.500 10.500" stroke="#a3a3a3" strokeWidth="2" /></svg>
            </div>
            <div className="flex-1 border-t border-[#c8c8c8]" />
          </div>
        </div>
      </div>
      <div className="flex-1 flex items-center pl-1.5 text-[#4c4c4c]">
        <div className="w-[748px] pt-px">Loft profile objects made of multiple faces in parallel</div>
        <div className="w-[121px] h-[26px] rounded border border-[#c4c4c4] bg-gradient-to-b from-[#f8f8f8] to-[#ededed] flex items-center justify-center gap-1.5 pr-1.5 text-[#7a7a7a]">
          <svg viewBox="0 0 12 16" className="w-3 h-4"><rect x="2" y="1.500" width="8" height="12.500" rx="3.500" fill="#f4f4f4" stroke="#3d4448" strokeWidth="1.800" /><path d="M6 4V7" stroke="#3d4448" strokeWidth="1.500" /></svg>
          <span className="pt-0.5">Blender</span>
        </div>
        <div className="pl-2.5 pt-px">139,84 mm x 119,12 mm</div>
      </div>
      <SurfacesMenu />
    </div>
  );
}
